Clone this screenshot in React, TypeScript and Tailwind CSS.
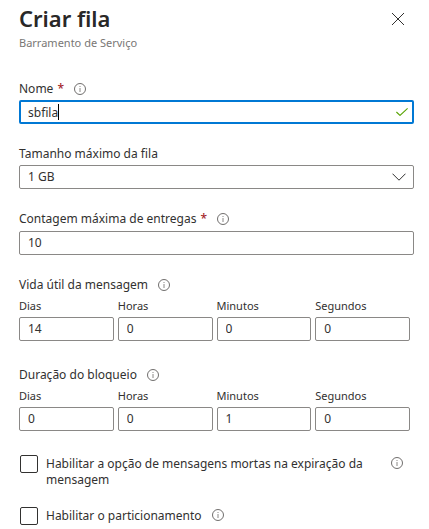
import { useState, type ReactNode } from "react";

function InfoIcon() {
  return (
    <svg viewBox="0 0 12 12" className="size-3 shrink-0" fill="none" aria-hidden="true">
      <circle cx="6" cy="6" r="5.5" stroke="#605e5c" strokeWidth="0.9" />
      <path d="M6 5v4M6 3v1" stroke="#8a8886" strokeWidth="1" />
    </svg>
  );
}

function Required() {
  return <span className="ml-1 font-medium text-[#a4262c]">*</span>;
}

function InfoRow({ children }: { children: ReactNode }) {
  return (
    <div className="flex h-4 items-center gap-2.5">
      {children}
      <InfoIcon />
    </div>
  );
}

const boxClass =
  "block h-6 w-full rounded-xs border border-[#8a8886] bg-white px-2 text-[12px] text-[#323130] outline-none";

const units = ["Dias", "Horas", "Minutos", "Segundos"];

function Duration({ id, title, values }: { id: string; title: string; values: string[] }) {
  return (
    <fieldset>
      <legend className="block">
        <InfoRow>{title}</InfoRow>
      </legend>
      <div className="mt-[5px] grid grid-cols-4 gap-1 pr-1">
        {units.map((unit, i) => (
          <div key={unit}>
            <label htmlFor={`${id}-${unit}`} className="block h-[19px] text-[11px] leading-4">
              {unit}
            </label>
            <input id={`${id}-${unit}`} defaultValue={values[i]} className={`${boxClass} pb-px`} />
          </div>
        ))}
      </div>
    </fieldset>
  );
}

const checkClass =
  "ml-px size-[18px] shrink-0 appearance-none rounded-xs border border-[#323130] bg-white checked:bg-[#0078d4]";

export default function App() {
  const [name, setName] = useState("sbfila");
  return (
    <form className="bg-white pr-[15px] pl-[19px] font-['Noto_Sans',sans-serif] text-[12px] leading-4 text-[#323130]">
      <header className="flex items-start justify-between pt-[3px]">
        <div>
          <h1 className="text-[22px] leading-[30px] font-semibold text-[#292827]">Criar fila</h1>
          <p className="mt-0.5 text-[11px] leading-4 text-[#797775]">Barramento de Serviço</p>
        </div>
        <button type="button" aria-label="Fechar" className="mt-2.5 mr-2.5">
          <svg viewBox="0 0 12 12" className="size-3" fill="none">
            <path d="M0 0l12 12M12 0L0 12" stroke="#323130" strokeWidth="1" />
          </svg>
        </button>
      </header>

      <div className="mt-[30px]">
        <InfoRow>
          <label htmlFor="name" className="flex">
            Nome
            <Required />
          </label>
        </InfoRow>
        <div className="mt-[3px] flex h-6 items-center rounded-xs border-2 border-[#0078d4] pr-1 pl-[7px]">
          <div className="relative min-w-0 flex-1">
            <input
              id="name"
              value={name}
              onChange={(e) => setName(e.target.value)}
              className="block h-5 w-full bg-transparent text-[12px] caret-transparent outline-none"
            />
            <div aria-hidden="true" className="pointer-events-none absolute inset-y-0 left-0 flex items-center">
              <span className="h-4 border-r border-black text-transparent">{name}</span>
            </div>
          </div>
          <svg viewBox="0 0 12 8" className="h-2 w-3" fill="none" aria-hidden="true">
            <path d="M0.4 4L4 7.4L11.6 0.4" stroke="#57a300" strokeWidth="1.1" />
          </svg>
        </div>
      </div>

      <div className="mt-[22px]">
        <label htmlFor="size" className="block">
          Tamanho máximo da fila
        </label>
        <div className="relative mt-[3px]">
          <select id="size" className={`${boxClass} appearance-none`}>
            <option>1 GB</option>
          </select>
          <svg
            viewBox="0 0 14 8"
            className="pointer-events-none absolute top-2 right-2 h-2 w-3.5"
            fill="none"
            aria-hidden="true"
          >
            <path d="M0.5 0.7L7 7.2L13.5 0.7" stroke="#323130" strokeWidth="1" />
          </svg>
        </div>
      </div>

      <div className="mt-[22px]">
        <InfoRow>
          <label htmlFor="count" className="flex">
            Contagem máxima de entregas
            <Required />
          </label>
        </InfoRow>
        <input id="count" defaultValue="10" className={`${boxClass} mt-1 pb-px`} />
      </div>

      <div className="mt-[22px] grid gap-[26px]">
        <Duration id="ttl" title="Vida útil da mensagem" values={["14", "0", "0", "0"]} />
        <Duration id="lock" title="Duração do bloqueio" values={["0", "0", "1", "0"]} />
      </div>

      <div className="mt-6 flex items-start gap-2 pr-[11px]">
        <input id="dead" type="checkbox" className={checkClass} />
        <label htmlFor="dead" className="flex-1 pt-px pr-3">
          Habilitar a opção de mensagens mortas na expiração da mensagem
        </label>
        <InfoRow>{null}</InfoRow>
      </div>
      <div className="mt-[19px] flex items-start gap-2">
        <input id="part" type="checkbox" className={checkClass} />
        <InfoRow>
          <label htmlFor="part" className="pt-px">
            Habilitar o particionamento
          </label>
        </InfoRow>
      </div>
    </form>
  );
}
